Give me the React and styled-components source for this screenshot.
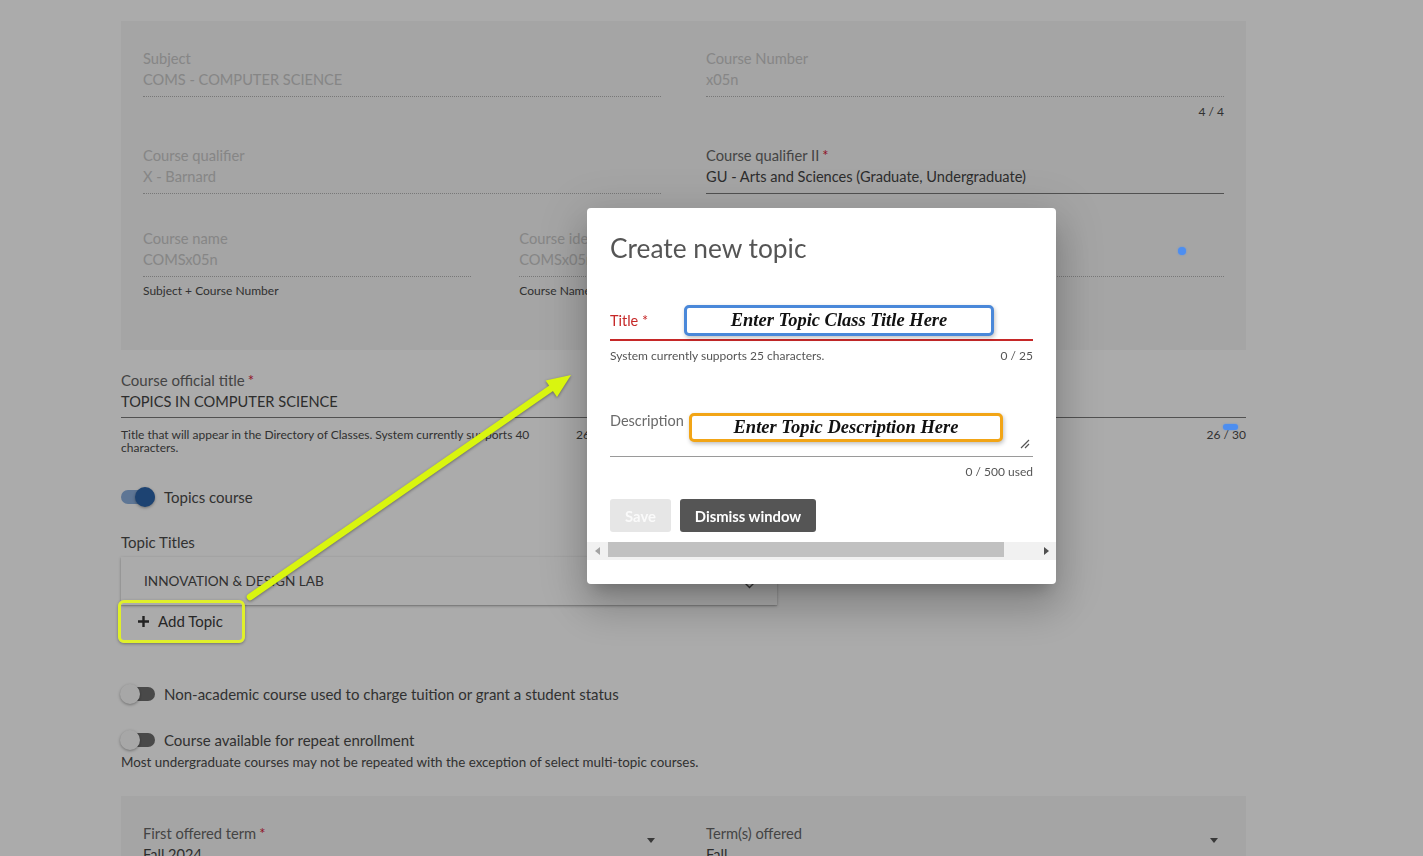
import React from "react";
import styled, { createGlobalStyle } from "styled-components";

const GlobalStyle = createGlobalStyle`
  html, body {
    margin: 0;
    padding: 0;
  }
  body {
    background: #ffffff;
    font-family: Lato, "Open Sans", "Liberation Sans", sans-serif;
    color: #4a4a4a;
    overflow: hidden;
  }
  * {
    box-sizing: border-box;
  }
`;

const Page = styled.main`
  width: 1125px;
  margin-left: 121px;
  padding-top: 21px;
`;

const Panel = styled.section`
  background: #f6f6f6;
  padding: 28px 22px 52px;
  margin-top: ${(p) => p.$top || 0}px;
`;

const Row = styled.div`
  display: grid;
  grid-template-columns: repeat(${(p) => p.$cols || 2}, 1fr);
  column-gap: ${(p) => (p.$cols === 3 ? 48 : 45)}px;
  margin-bottom: ${(p) => p.$after || 0}px;
  margin-top: ${(p) => p.$top || 0}px;
`;

const Field = styled.div`
  position: relative;
  min-width: 0;
`;

const Label = styled.div`
  font-size: ${(p) => (p.$big ? 15 : 14.7)}px;
  line-height: 18px;
  color: ${(p) => (p.$active ? "#666666" : "#c8c8c8")};
  white-space: nowrap;
`;

const Req = styled.span`
  color: #d8203a;
  margin-left: 3px;
`;

const Value = styled.div`
  display: flex;
  justify-content: space-between;
  align-items: flex-start;
  font-size: ${(p) => (p.$big ? 14.6 : 14.6)}px;
  line-height: 22px;
  margin-top: 2px;
  padding-bottom: ${(p) => (p.$big ? 4 : 5)}px;
  border-bottom: 1px ${(p) => (p.$active ? "solid #7a7a7a" : "dotted #b4b4b4")};
  color: ${(p) => (p.$active ? "#444444" : "#c8c8c8")};
  white-space: nowrap;
`;

const Helper = styled.div`
  display: flex;
  justify-content: ${(p) => (p.$end ? "flex-end" : "space-between")};
  gap: 5px;
  font-size: 12px;
  line-height: ${(p) => (p.$tight ? 13 : 14)}px;
  margin-top: ${(p) => p.$top || 8}px;
  color: #4a4a4a;
`;

const HelperText = styled.span`
  max-width: ${(p) => p.$max || 9999}px;
`;

const Caret = styled.span`
  margin-top: -6px;
  margin-right: 6px;
  width: 0;
  height: 0;
  border-left: 4px solid transparent;
  border-right: 4px solid transparent;
  border-top: 5px solid #555;
`;

const Blip = styled.span`
  position: absolute;
  z-index: 30;
  left: ${(p) => p.$x}px;
  top: ${(p) => p.$y}px;
  width: ${(p) => p.$w}px;
  height: ${(p) => p.$h}px;
  border-radius: 6px;
  background: #4d8ef0;
  box-shadow: 0 0 2px rgba(77, 142, 240, 0.8);
`;

const ToggleRow = styled.label`
  display: flex;
  align-items: center;
  gap: 9px;
  height: 20px;
  margin-top: ${(p) => p.$top || 0}px;
  font-size: 15px;
  color: #4a4a4a;
`;

const Switch = styled.span`
  position: relative;
  width: 34px;
  height: 14px;
  border-radius: 7px;
  background: ${(p) => (p.$on ? "#8cb0de" : "#6e6e6e")};
  flex: none;

  &::after {
    content: "";
    position: absolute;
    top: -3px;
    left: ${(p) => (p.$on ? 14 : -1)}px;
    width: 20px;
    height: 20px;
    border-radius: 50%;
    background: ${(p) => (p.$on ? "#2c64aa" : "#fafafa")};
    box-shadow: 0 1px 3px rgba(0, 0, 0, 0.35);
  }
`;

const SectionLabel = styled.div`
  margin-top: 26px;
  font-size: 15px;
  line-height: 18px;
  color: #4a4a4a;
`;

const TopicItem = styled.div`
  margin-top: 6px;
  width: 656px;
  height: 48px;
  display: flex;
  align-items: center;
  justify-content: space-between;
  padding: 0 22px 0 23px;
  background: #ffffff;
  box-shadow: 0 1px 3px rgba(0, 0, 0, 0.25), 0 1px 1px rgba(0, 0, 0, 0.12);
  font-size: 13.6px;
  color: #4a4a4a;
  text-transform: uppercase;

  svg {
    margin-top: 8px;
  }
`;

const AddButton = styled.button`
  position: relative;
  display: flex;
  align-items: center;
  gap: 8px;
  height: 32px;
  padding: 0 16px;
  border: none;
  background: transparent;
  font-family: inherit;
  font-size: 15px;
  color: #3a3a3a;

  &::after {
    content: "";
    position: absolute;
    z-index: 30;
    left: -3px;
    right: -6px;
    top: -5px;
    bottom: -6px;
    border: 3px solid #e0f02a;
    border-radius: 6px;
    box-shadow: 0 1px 3px rgba(0, 0, 0, 0.35);
  }
`;

const Note = styled.div`
  margin-top: 5px;
  font-size: 13.4px;
  line-height: 14px;
  color: #4a4a4a;
`;

const Backdrop = styled.div`
  position: fixed;
  inset: 0;
  z-index: 10;
  background: rgba(0, 0, 0, 0.33);
`;

const Dialog = styled.div`
  position: fixed;
  left: 587px;
  top: 208px;
  width: 469px;
  height: 376px;
  z-index: 20;
  display: flex;
  flex-direction: column;
  background: #ffffff;
  border-radius: 4px;
  overflow: hidden;
  box-shadow: 0 11px 15px -7px rgba(0, 0, 0, 0.2),
    0 24px 38px 3px rgba(0, 0, 0, 0.14), 0 9px 46px 8px rgba(0, 0, 0, 0.12);
`;

const DialogTitle = styled.h2`
  margin: 0;
  padding: 25px 23px 0;
  font-size: 26.3px;
  font-weight: 400;
  line-height: 30px;
  color: #555555;
`;

const DialogBody = styled.div`
  padding: 0 23px;
`;

const InputLine = styled.div`
  position: relative;
  display: flex;
  height: ${(p) => p.$h}px;
  margin-top: ${(p) => p.$top}px;
  padding-bottom: ${(p) => p.$pb || 0}px;
  padding-top: ${(p) => p.$pt || 0}px;
  align-items: ${(p) => (p.$pt ? "flex-start" : "flex-end")};
  border-bottom: ${(p) => (p.$error ? "2px solid #c62828" : "1px solid #9a9a9a")};
`;

const InputLabel = styled.span`
  font-size: 14.5px;
  line-height: 18px;
  color: ${(p) => (p.$error ? "#c62828" : "#6a6a6a")};
`;

const Callout = styled.div`
  position: absolute;
  left: ${(p) => p.$x}px;
  top: ${(p) => p.$y}px;
  width: ${(p) => p.$w}px;
  height: ${(p) => p.$h}px;
  display: flex;
  align-items: center;
  justify-content: center;
  background: #ffffff;
  border: 3px solid ${(p) => p.$color};
  border-radius: 5px;
  box-shadow: 1px 2px 4px rgba(0, 0, 0, 0.25);
  font-family: "Liberation Serif", "Times New Roman", serif;
  font-style: italic;
  font-weight: 700;
  font-size: 18.5px;
  color: #111111;
  white-space: nowrap;
`;

const Grip = styled.svg`
  position: absolute;
  right: 3px;
  bottom: 7px;
`;

const Counter = styled.div`
  display: flex;
  justify-content: space-between;
  margin-top: 8px;
  font-size: 12px;
  line-height: 14px;
  color: #555555;
`;

const Actions = styled.div`
  display: flex;
  gap: 9px;
  margin-top: 20px;
`;

const ActionButton = styled.button`
  height: 33px;
  width: ${(p) => p.$w}px;
  padding: 0;
  border: none;
  border-radius: 3px;
  font-family: inherit;
  font-size: 14.8px;
  font-weight: 700;
  background: ${(p) => (p.$primary ? "#555555" : "#e6e6e6")};
  color: ${(p) => (p.$primary ? "#ffffff" : "#fafafa")};
`;

const ScrollTrack = styled.div`
  display: flex;
  align-items: stretch;
  height: 18px;
  margin-top: 10px;
  background: #f1f1f1;
`;

const ScrollArrow = styled.span`
  width: 20px;
  display: flex;
  align-items: center;
  justify-content: center;

  &::before {
    content: "";
    border-top: 4px solid transparent;
    border-bottom: 4px solid transparent;
    ${(p) =>
      p.$dir === "left"
        ? "border-right: 5px solid #a3a3a3;"
        : "border-left: 5px solid #505050;"}
  }
`;

const ScrollThumb = styled.span`
  width: 396px;
  height: 15px;
  margin-left: 1px;
  background: #c1c1c1;
`;

const ScrollGap = styled.span`
  flex: 1;
`;

const ArrowLayer = styled.svg`
  position: fixed;
  left: 0;
  top: 0;
  z-index: 30;
  pointer-events: none;
  filter: drop-shadow(0 1px 1.5px rgba(0, 0, 0, 0.4));
`;

const Chevron = () => (
  <svg width="11" height="7" viewBox="0 0 11 7">
    <path d="M1 1l4.5 4.5L10 1" fill="none" stroke="#555" strokeWidth="1.4" />
  </svg>
);

const PlusIcon = () => (
  <svg width="13" height="13" viewBox="0 0 13 13">
    <path d="M6.5 1v11M1 6.5h11" stroke="#333" strokeWidth="2.4" />
  </svg>
);

const ReadField = ({ label, value, helper, counter, active, required, children }) => (
  <Field>
    <Label $active={active}>
      {label}
      {required && <Req>*</Req>}
    </Label>
    <Value $active={active}>{value}</Value>
    {(helper || counter) && (
      <Helper $end={!helper} $top={helper ? 7 : 8}>
        {helper && <span>{helper}</span>}
        {counter && <span>{counter}</span>}
      </Helper>
    )}
    {children}
  </Field>
);

const SelectField = ({ label, value, required }) => (
  <Field>
    <Label $active>
      {label}
      {required && <Req>*</Req>}
    </Label>
    <Value $active>
      {value}
      <Caret />
    </Value>
  </Field>
);

export default function App() {
  return (
    <>
      <GlobalStyle />
      <Page>
        <Panel>
          <Row $after={27}>
            <ReadField label="Subject" value="COMS - COMPUTER SCIENCE" />
            <ReadField label="Course Number" value="x05n" counter="4 / 4" />
          </Row>
          <Row $after={35}>
            <ReadField label="Course qualifier" value="X - Barnard" />
            <ReadField
              label="Course qualifier II"
              value="GU - Arts and Sciences (Graduate, Undergraduate)"
              active
              required
            />
          </Row>
          <Row $cols={3}>
            <ReadField
              label="Course name"
              value="COMSx05n"
              helper="Subject + Course Number"
            />
            <ReadField
              label="Course identifier"
              value="COMSx05n"
              helper="Course Name + Course qualifier"
            />
            <ReadField label="Catalog key" value="COMSx05n" helper="Course identifier">
              <Blip $x={282} $y={18} $w={8} $h={8} />
            </ReadField>
          </Row>
        </Panel>

        <Row $top={21}>
          <Field>
            <Label $active $big>
              Course official title<Req>*</Req>
            </Label>
            <Value $active $big>
              TOPICS IN COMPUTER SCIENCE
            </Value>
            <Helper $tight $top={10}>
              <HelperText $max={450}>
                Title that will appear in the Directory of Classes. System
                currently supports 40 characters.
              </HelperText>
              <span style={{ marginRight: "auto" }}>26 / 40</span>
            </Helper>
          </Field>
          <Field>
            <Label $active $big>
              Course short title<Req>*</Req>
            </Label>
            <Value $active $big>
              TOPICS IN COMPUTER SCIENCE
            </Value>
            <Helper $tight $top={10} $end>
              <span>26 / 30</span>
            </Helper>
            <Blip $x={517} $y={53} $w={15} $h={6} />
          </Field>
        </Row>

        <ToggleRow $top={33}>
          <Switch $on />
          Topics course
        </ToggleRow>

        <SectionLabel>Topic Titles</SectionLabel>
        <TopicItem>
          INNOVATION &amp; DESIGN LAB
          <Chevron />
        </TopicItem>
        <AddButton>
          <PlusIcon />
          Add Topic
        </AddButton>

        <ToggleRow $top={47}>
          <Switch />
          Non-academic course used to charge tuition or grant a student status
        </ToggleRow>
        <ToggleRow $top={26}>
          <Switch />
          Course available for repeat enrollment
        </ToggleRow>
        <Note>
          Most undergraduate courses may not be repeated with the exception of
          select multi-topic courses.
        </Note>

        <Panel $top={27}>
          <Row>
            <SelectField label="First offered term" value="Fall 2024" required />
            <SelectField label="Term(s) offered" value="Fall" />
          </Row>
        </Panel>
      </Page>

      <Backdrop />

      <Dialog role="dialog">
        <DialogTitle>Create new topic</DialogTitle>
        <DialogBody>
          <InputLine $h={41} $top={37} $pb={9} $error>
            <InputLabel $error>Title *</InputLabel>
            <Callout $x={74} $y={5} $w={310} $h={31} $color="#4a88d9">
              Enter Topic Class Title Here
            </Callout>
          </InputLine>
          <Counter>
            <span>System currently supports 25 characters.</span>
            <span>0 / 25</span>
          </Counter>
          <InputLine $h={57} $top={37} $pt={12}>
            <InputLabel>Description</InputLabel>
            <Callout $x={79} $y={13} $w={314} $h={29} $color="#f2a516">
              Enter Topic Description Here
            </Callout>
            <Grip width="10" height="10" viewBox="0 0 10 10">
              <path d="M1 9L9 1M5 9L9 5" stroke="#555" strokeWidth="1.2" />
            </Grip>
          </InputLine>
          <Counter>
            <span />
            <span>0 / 500 used</span>
          </Counter>
          <Actions>
            <ActionButton $w={61}>Save</ActionButton>
            <ActionButton $w={136} $primary>
              Dismiss window
            </ActionButton>
          </Actions>
        </DialogBody>
        <ScrollTrack>
          <ScrollArrow $dir="left" />
          <ScrollThumb />
          <ScrollGap />
          <ScrollArrow $dir="right" />
        </ScrollTrack>
      </Dialog>

      <ArrowLayer width="1423" height="856" viewBox="0 0 1423 856">
        <line
          x1="250"
          y1="597"
          x2="553"
          y2="387"
          stroke="#d9f50f"
          strokeWidth="6.5"
          strokeLinecap="round"
        />
        <polygon points="571,375 557,397 545.6,380.5" fill="#d9f50f" />
      </ArrowLayer>
    </>
  );
}
